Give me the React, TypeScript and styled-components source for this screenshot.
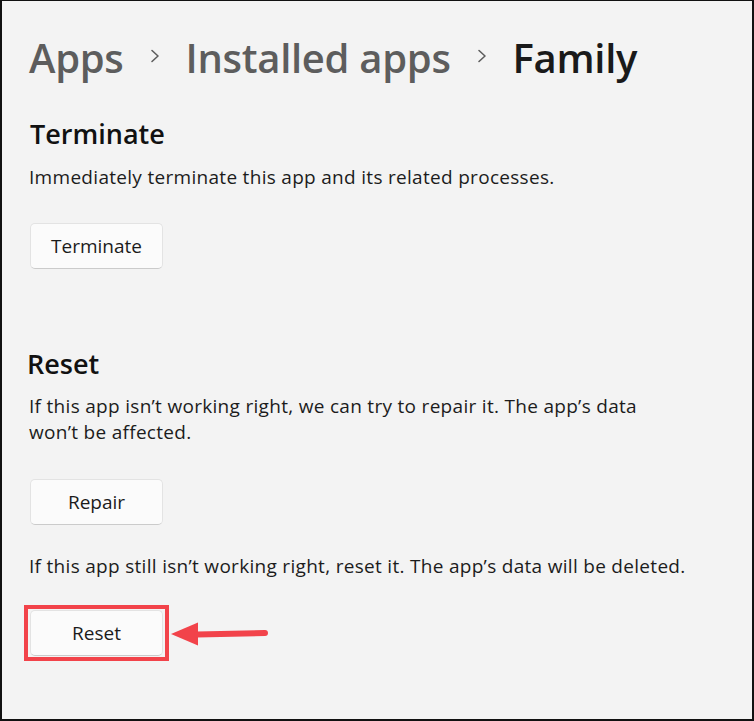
import React from "react";
import styled, { createGlobalStyle } from "styled-components";

const Global = createGlobalStyle`
  html, body { margin: 0; padding: 0; background: #f3f3f3; }
  * { box-sizing: border-box; }
`;

const Frame = styled.div`
  width: 754px;
  height: 721px;
  border: 2px solid #111;
  border-top-width: 1px;
  background: #f3f3f3;
  padding: 27px 0 0 27px;
  font-family: "Open Sans", "Noto Sans", sans-serif;
  color: #1b1b1b;
`;

const Breadcrumb = styled.div`
  display: flex;
  align-items: center;
  gap: 26px;
  height: 60px;
`;

const Crumb = styled.span<{ $current?: boolean }>`
  font-size: 40px;
  line-height: 60px;
  font-weight: 600;
  letter-spacing: -0.3px;
  color: ${(p) => (p.$current ? "#1a1a1a" : "#5d5d5d")};
`;

const Chevron = styled.svg`
  width: 10px;
  height: 14px;
  margin-top: -4px;
`;

const Section = styled.section<{ $top: number }>`
  margin-top: ${(p) => p.$top}px;
  display: flex;
  flex-direction: column;
  align-items: flex-start;
`;

const Heading = styled.h2<{ $shift?: number }>`
  margin: 0 0 0 ${(p) => p.$shift ?? 0}px;
  font-size: 27px;
  font-weight: 600;
  line-height: 34px;
  color: #111;
`;

const Desc = styled.p<{ $gap: number }>`
  margin: ${(p) => p.$gap}px 0 0 0;
  font-size: 19px;
  line-height: 26px;
  letter-spacing: 0.3px;
  color: #1c1c1c;
  white-space: nowrap;
`;

const Button = styled.button`
  width: 133px;
  height: 46px;
  background: #fbfbfb;
  border: 1px solid #e3e3e3;
  border-bottom-color: #cbcbcb;
  border-radius: 5px;
  font-family: "Open Sans", "Noto Sans", sans-serif;
  font-size: 19px;
  color: #1b1b1b;
  padding: 0;
`;

const ButtonSlot = styled.div<{ $gap: number }>`
  margin: ${(p) => p.$gap}px 0 0 1px;
`;

const HighlightRow = styled.div`
  margin: 26px 0 0 -5px;
  display: flex;
  align-items: center;
`;

const Highlight = styled.div`
  border: 4px solid #f2434a;
  padding: 1px 2px;
  display: flex;
`;

const Arrow = styled.svg`
  width: 100px;
  height: 26px;
  margin-top: 1px;
`;

const ChevronIcon = () => (
  <Chevron viewBox="0 0 10 14">
    <path d="M2 1.5 L8 7 L2 12.5" fill="none" stroke="#5d5d5d" strokeWidth="1.6" strokeLinecap="round" strokeLinejoin="round" />
  </Chevron>
);

export default function App() {
  return (
    <>
      <Global />
      <Frame>
        <Breadcrumb>
          <Crumb>Apps</Crumb>
          <ChevronIcon />
          <Crumb>Installed apps</Crumb>
          <ChevronIcon />
          <Crumb $current>Family</Crumb>
        </Breadcrumb>

        <Section $top={29}>
          <Heading $shift={1}>Terminate</Heading>
          <Desc $gap={13}>Immediately terminate this app and its related processes.</Desc>
          <ButtonSlot $gap={33}>
            <Button>Terminate</Button>
          </ButtonSlot>
        </Section>

        <Section $top={78}>
          <Heading $shift={-2}>Reset</Heading>
          <Desc $gap={12}>
            If this app isn’t working right, we can try to repair it. The app’s data
            <br />
            won’t be affected.
          </Desc>
          <ButtonSlot $gap={34}>
            <Button>Repair</Button>
          </ButtonSlot>
          <Desc $gap={28}>If this app still isn’t working right, reset it. The app’s data will be deleted.</Desc>
          <HighlightRow>
            <Highlight>
              <Button>Reset</Button>
            </Highlight>
            <Arrow viewBox="0 0 100 26">
              <path d="M2 13 L29 1.5 L29 24.5 Z" fill="#f2434a" />
              <path d="M28 13.5 L96 12" stroke="#f2434a" strokeWidth="6" strokeLinecap="round" />
            </Arrow>
          </HighlightRow>
        </Section>
      </Frame>
    </>
  );
}
